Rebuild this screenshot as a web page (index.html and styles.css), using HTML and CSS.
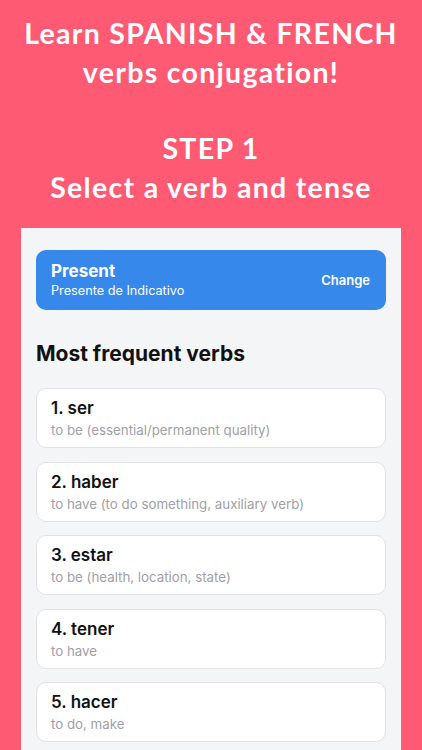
FILE: index.html
```html
<!DOCTYPE html>
<html lang="en">
<head>
<meta charset="utf-8">
<title>Verbs conjugation</title>
<link rel="stylesheet" href="styles.css">
</head>
<body>
<header class="promo">
  <h1 class="promo-title">Learn SPANISH &amp; FRENCH<br>verbs conjugation!</h1>
  <h2 class="promo-step">STEP 1<br>Select a verb and tense</h2>
</header>
<main class="phone">
  <div class="tense-card">
    <div class="tense-info">
      <div class="tense-name">Present</div>
      <div class="tense-sub">Presente de Indicativo</div>
    </div>
    <div class="tense-change">Change</div>
  </div>
  <h3 class="section-title">Most frequent verbs</h3>
  <ul class="verb-list">
    <li class="verb"><div class="verb-name">1. ser</div><div class="verb-meaning">to be (essential/permanent quality)</div></li>
    <li class="verb"><div class="verb-name">2. haber</div><div class="verb-meaning">to have (to do something, auxiliary verb)</div></li>
    <li class="verb"><div class="verb-name">3. estar</div><div class="verb-meaning">to be (health, location, state)</div></li>
    <li class="verb"><div class="verb-name">4. tener</div><div class="verb-meaning">to have</div></li>
    <li class="verb"><div class="verb-name">5. hacer</div><div class="verb-meaning">to do, make</div></li>
  </ul>
</main>
</body>
</html>
```
FILE: styles.css
```css
html, body {
  margin: 0;
  padding: 0;
}
body {
  background: #fe5a74;
  width: 422px;
  height: 750px;
  overflow: hidden;
}
.promo {
  padding-top: 14px;
  text-align: center;
  color: #fff;
  font-family: Lato, "Noto Sans", sans-serif;
  font-weight: 700;
}
.promo-title, .promo-step {
  margin: 0;
  font-size: 28.5px;
  line-height: 39px;
  font-weight: 700;
  letter-spacing: 1.3px;
}
.promo-step {
  margin-top: 37px;
}
.phone {
  margin: 21px 21px 0 21px;
  background: #f4f5f7;
  padding: 22px 15px 0 15px;
  height: 522px;
  box-sizing: border-box;
  overflow: hidden;
  font-family: Inter, "Noto Sans", sans-serif;
}
.tense-card {
  height: 60px;
  box-sizing: border-box;
  background: #3688eb;
  border-radius: 10px;
  padding: 0 16px 0 15px;
  display: flex;
  align-items: center;
  justify-content: space-between;
  color: #fff;
}
.tense-name {
  font-size: 17px;
  line-height: 22px;
  font-weight: 700;
}
.tense-sub {
  font-size: 12.7px;
  line-height: 18px;
  font-weight: 400;
}
.tense-change {
  font-size: 13px;
  font-weight: 600;
}
.section-title {
  margin: 30px 0 20px 0;
  font-size: 21px;
  line-height: 28px;
  font-weight: 700;
  color: #111;
}
.verb-list {
  list-style: none;
  margin: 0;
  padding: 0;
  display: flex;
  flex-direction: column;
  gap: 13.5px;
}
.verb {
  background: #fff;
  border: 1px solid #e2e2e5;
  border-radius: 10px;
  padding: 8px 14px;
  display: flex;
  flex-direction: column;
  gap: 2px;
}
.verb-name {
  font-size: 17px;
  line-height: 22px;
  font-weight: 600;
  color: #111;
}
.verb-meaning {
  font-size: 13.3px;
  line-height: 18px;
  color: #a0a0a6;
}
```
